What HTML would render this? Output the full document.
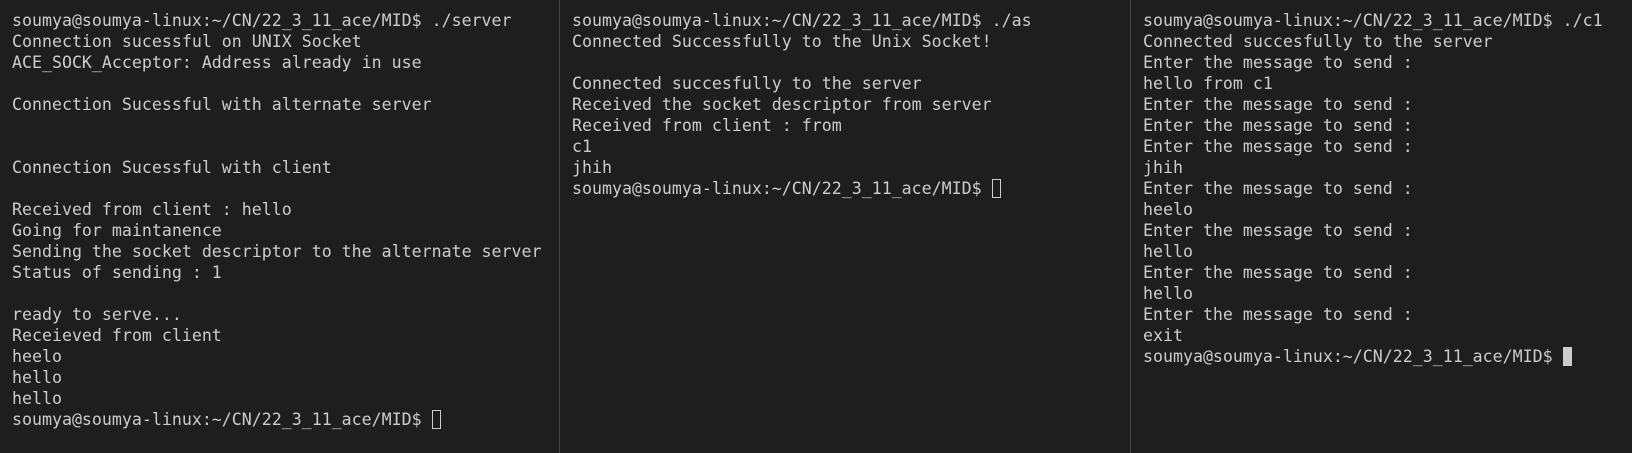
<!DOCTYPE html>
<html><head><style>
html,body{margin:0;padding:0;background:#1e1e1e;width:1632px;height:453px;overflow:hidden}
.p{position:absolute;top:0;height:453px;box-sizing:border-box;padding-top:10px}
pre{margin:0;font-family:"DejaVu Sans Mono","Liberation Mono",monospace;font-size:16.6px;line-height:21px;color:#cccccc;white-space:pre}
.d{position:absolute;top:0;width:1px;height:453px;background:#444}
.c{display:inline-block;width:9px;height:19px;border:1px solid #ccc;vertical-align:-4px;box-sizing:border-box}
.f{background:#ccc}
</style></head><body>
<div class="p" style="left:12px"><pre>soumya@soumya-linux:~/CN/22_3_11_ace/MID$ ./server
Connection sucessful on UNIX Socket
ACE_SOCK_Acceptor: Address already in use

Connection Sucessful with alternate server


Connection Sucessful with client

Received from client : hello
Going for maintanence
Sending the socket descriptor to the alternate server
Status of sending : 1

ready to serve...
Receieved from client
heelo
hello
hello
soumya@soumya-linux:~/CN/22_3_11_ace/MID$ <span class="c"></span></pre></div>
<div class="d" style="left:559px"></div>
<div class="p" style="left:572px"><pre>soumya@soumya-linux:~/CN/22_3_11_ace/MID$ ./as
Connected Successfully to the Unix Socket!

Connected succesfully to the server
Received the socket descriptor from server
Received from client : from
c1
jhih
soumya@soumya-linux:~/CN/22_3_11_ace/MID$ <span class="c"></span></pre></div>
<div class="d" style="left:1130px"></div>
<div class="p" style="left:1143px"><pre>soumya@soumya-linux:~/CN/22_3_11_ace/MID$ ./c1
Connected succesfully to the server
Enter the message to send :
hello from c1
Enter the message to send :
Enter the message to send :
Enter the message to send :
jhih
Enter the message to send :
heelo
Enter the message to send :
hello
Enter the message to send :
hello
Enter the message to send :
exit
soumya@soumya-linux:~/CN/22_3_11_ace/MID$ <span class="c f"></span></pre></div>
</body></html>
